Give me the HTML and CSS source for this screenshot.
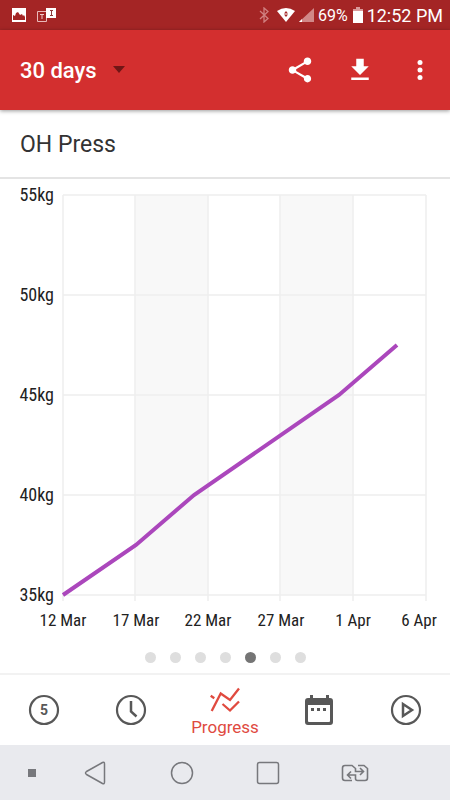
FILE: index.html
```html
<!DOCTYPE html>
<html lang="en">
<head>
    <meta charset="UTF-8">
    <meta name="viewport" content="width=device-width, initial-scale=1.0">
    <title>Progress - OH Press</title>
    <link rel="stylesheet" href="styles.css">
</head>
<body>
    <div class="status-bar">
        <svg width="14" height="14" viewBox="0 0 14 14">
            <path fill="#fff" fill-rule="evenodd" d="M0 0h14v14H0zM1 12h12V9l-1-2-1 1-1-2-2 1-2-3-2 1-1 3-2-1z"/>
        </svg>
        <svg class="status-translate" width="20" height="14" viewBox="0 0 20 14">
            <path fill="none" stroke="#e9b9b9" d="M9.500 3.500h-9v10h9z"/>
            <path fill="#fff" d="M9 0h10v10H9z"/>
            <path fill="none" stroke="#f0caca" d="M3 6.500h4M5 6v5"/>
            <path fill="none" stroke="#8c3a3a" d="M13 2.500h3M14.500 3v4M13 7.500h3"/>
        </svg>
        <div class="status-right">
            <svg class="status-bluetooth" width="10" height="16" viewBox="0 0 10 16">
                <path fill="none" stroke="#d08080" stroke-width="1.300" d="M1 4l8 7.500L5 15V1l4 3.500L1 12"/>
            </svg>
            <svg class="status-wifi" width="18" height="14" viewBox="0 0 18 14">
                <path fill="#fff" d="M0 3Q9-3 18 3L9 14z"/>
                <path fill="#a42525" d="M9 3l2 2.500H7zM9 9l2-2.500H7z"/>
            </svg>
            <svg class="status-signal" width="15" height="14" viewBox="0 0 15 14">
                <path fill="#d18888" d="M15 0v14H0z"/>
                <path fill="#fff" d="M3 11v3H0z"/>
            </svg>
            <span class="battery-level">69%</span>
            <svg class="status-battery" width="10" height="16" viewBox="0 0 10 16">
                <path fill="#d99a9a" d="M3 0h4v2h3v3H0V2h3z"/>
                <path fill="#fff" d="M0 4h10v12H0z"/>
            </svg>
            <span class="time">12:52 PM</span>
        </div>
    </div>

    <header class="toolbar">
        <select class="period" aria-label="Period">
            <option>30 days</option>
            <option>60 days</option>
            <option>90 days</option>
        </select>
        <div class="actions">
            <button aria-label="Share">
                <svg width="30" height="30" viewBox="0 0 24 24">
                    <path fill="#fff" d="M18 16.080c-.76 0-1.440.3-1.960.77L8.910 12.700c.05-.23.09-.46.09-.7s-.04-.47-.09-.7l7.050-4.110c.54.5 1.250.81 2.040.81 1.660 0 3-1.340 3-3s-1.340-3-3-3-3 1.340-3 3c0 .24.04.47.09.7L8.040 9.810C7.500 9.310 6.790 9 6 9c-1.660 0-3 1.340-3 3s1.340 3 3 3c.79 0 1.500-.31 2.040-.81l7.120 4.160c-.05.21-.08.43-.08.65 0 1.610 1.310 2.920 2.920 2.920s2.920-1.310 2.920-2.920-1.310-2.920-2.920-2.920z"/>
                </svg>
            </button>
            <button aria-label="Download">
                <svg width="30" height="30" viewBox="0 0 24 24">
                    <path fill="#fff" d="M19 9h-4V3H9v6H5l7 7 7-7zM5 18v2h14v-2H5z"/>
                </svg>
            </button>
            <button aria-label="More options">
                <svg width="30" height="30" viewBox="0 0 24 24">
                    <g fill="#fff">
                        <circle cx="12" cy="6" r="2"/>
                        <circle cx="12" cy="12" r="2"/>
                        <circle cx="12" cy="18" r="2"/>
                    </g>
                </svg>
            </button>
        </div>
    </header>

    <main>
        <h1>OH Press</h1>

        <svg class="chart" viewBox="0 0 450 461" role="img" aria-label="OH Press weight over 30 days">
            <g class="bands">
                <rect x="135" y="16" width="73" height="400"/>
                <rect x="280" y="16" width="73" height="400"/>
            </g>
            <g class="grid">
                <path d="M63 16h363M63 116h363M63 216h363M63 316h363M63 416h363"/>
                <path d="M63 16v406M135 16v406M208 16v406M280 16v406M353 16v406M426 16v406"/>
            </g>
            <g class="y-labels">
                <text x="54" y="22">55kg</text>
                <text x="54" y="122">50kg</text>
                <text x="54" y="222">45kg</text>
                <text x="54" y="322">40kg</text>
                <text x="54" y="422">35kg</text>
            </g>
            <g class="x-labels">
                <text x="63" y="447">12 Mar</text>
                <text x="136" y="447">17 Mar</text>
                <text x="208" y="447">22 Mar</text>
                <text x="281" y="447">27 Mar</text>
                <text x="353" y="447">1 Apr</text>
                <text x="419" y="447">6 Apr</text>
            </g>
            <polyline class="line" points="63,416 136,366 194,316 339,216 397,166"/>
        </svg>

        <div class="dots">
            <span></span>
            <span></span>
            <span></span>
            <span></span>
            <span class="current"></span>
            <span></span>
            <span></span>
        </div>
    </main>

    <nav class="tabs">
        <a href="#workout" aria-label="Workout">
            <svg width="32" height="32" viewBox="0 0 32 32">
                <circle cx="16" cy="16" r="14" fill="none" stroke="#585858" stroke-width="2.200"/>
                <text class="five" x="16" y="21">5</text>
            </svg>
        </a>
        <a href="#history" aria-label="History">
            <svg width="32" height="32" viewBox="0 0 32 32" fill="none" stroke="#585858">
                <circle cx="16" cy="16" r="14" stroke-width="2.200"/>
                <path stroke-width="2.500" d="M16 7v10.500l5.500 5"/>
            </svg>
        </a>
        <a href="#progress" class="active">
            <svg width="30" height="28" viewBox="0 0 30 28" fill="none" stroke="#e04a3f" stroke-width="2.300">
                <path d="M.7 9.800l3.600 2.500M1.700 25l9-17.500L20 14l9-11.500M12.500 18l7.500 6.500 9-9"/>
            </svg>
            <span>Progress</span>
        </a>
        <a href="#calendar" aria-label="Calendar">
            <svg width="32" height="32" viewBox="0 0 32 32" fill="#585858">
                <path fill-rule="evenodd" d="M7 1h3v3h13V1h3v3h1q3 0 3 3v21q0 3-3 3H5q-3 0-3-3V7q0-3 3-3h2zM5 11v16q0 1 1 1h20q1 0 1-1V11z"/>
                <path d="M8 14h3v3H8zM14 14h3v3h-3zM20 14h3v3h-3z"/>
            </svg>
        </a>
        <a href="#videos" aria-label="Videos">
            <svg width="32" height="32" viewBox="0 0 32 32" fill="none" stroke="#585858">
                <circle cx="16" cy="16" r="14" stroke-width="2.200"/>
                <path stroke-width="2.500" d="M13 10v12l9-6z"/>
            </svg>
        </a>
    </nav>

    <div class="system-bar">
        <button aria-label="Hide bar">
            <svg width="8" height="8" viewBox="0 0 8 8"><path fill="#77787c" d="M0 0h8v8H0z"/></svg>
        </button>
        <button aria-label="Back">
            <svg width="24" height="24" viewBox="0 0 24 24">
                <path fill="none" stroke="#77787c" stroke-width="1.500" stroke-linejoin="round" d="M19.500 1.500Q21.500.5 21.500 3v18q0 2.500-2 1.500L3.500 13.500q-2-1.500 0-3z"/>
            </svg>
        </button>
        <button aria-label="Home">
            <svg width="24" height="24" viewBox="0 0 24 24">
                <circle cx="12" cy="12" r="10.500" fill="none" stroke="#77787c" stroke-width="1.500"/>
            </svg>
        </button>
        <button aria-label="Recent apps">
            <svg width="24" height="24" viewBox="0 0 24 24">
                <rect x="1.500" y="1.500" width="21" height="21" rx="2" fill="none" stroke="#77787c" stroke-width="1.500"/>
            </svg>
        </button>
        <button aria-label="Switch apps">
            <svg width="28" height="20" viewBox="0 0 28 20">
                <path fill="none" stroke="#77787c" stroke-width="1.600" d="M11 17.500H4q-2.500 0-2.500-2.500V5q0-2.500 2.500-2.500h7l3.500 3v3H22M19 5l3.500 3.500L19 12M17 2.500h6l3.500 3v9.500q0 2.500-2.500 2.500h-7.500q-2 0-2-2V12H7M10 8.500L6.500 12l3.500 3.500"/>
            </svg>
        </button>
    </div>
</body>
</html>
```
FILE: styles.css
```css
* { margin: 0; padding: 0; box-sizing: border-box; }
body {
    font-family: Roboto, sans-serif;
    background: #fff;
    color: #333;
    min-height: 100vh;
    display: flex;
    flex-direction: column;
}
svg { display: block; flex-shrink: 0; }
button { background: none; border: none; cursor: pointer; }

.status-bar {
    height: 30px;
    padding: 0 7px 0 12px;
    display: flex;
    align-items: center;
    background: #a42525;
    color: #fff;
}
.status-translate { margin-left: 11px; }
.status-right { display: flex; align-items: center; margin-left: auto; }
.status-wifi { margin-left: 8px; }
.status-signal { margin-left: 4px; }
.battery-level { margin-left: 4px; font-size: 16px; }
.status-battery { margin: 0 4px 0 5px; }
.time { font-size: 18px; }

.toolbar {
    height: 80px;
    padding: 0 15px 0 20px;
    display: flex;
    align-items: center;
    justify-content: space-between;
    background: #d32f2f;
    box-shadow: 0 1px 4px rgba(0, 0, 0, 0.4);
}
.period {
    appearance: none;
    border: none;
    padding-right: 28px;
    font-family: inherit;
    font-size: 22px;
    font-weight: 500;
    color: #fff;
    background: url("data:image/svg+xml,%3Csvg xmlns='http://www.w3.org/2000/svg' width='12' height='7'%3E%3Cpath fill='%23701616' d='M0 0h12L6 7z'/%3E%3C/svg%3E") no-repeat right 8px;
}
.actions { display: flex; gap: 30px; }

main { flex: 1; }
h1 {
    padding: 20px 20px 18px;
    border-bottom: 2px solid #e4e4e4;
    font-size: 23px;
    font-weight: 400;
    line-height: 29px;
}

.chart {
    width: 100%;
    font-family: "Roboto Condensed", Roboto, sans-serif;
    font-size: 18px;
}
.bands rect { fill: #f8f8f8; }
.grid path { stroke: #eee; stroke-width: 1.500; }
.chart text { fill: #222; }
.y-labels { text-anchor: end; }
.x-labels { font-size: 17px; text-anchor: middle; }
.line { fill: none; stroke: #ab47bc; stroke-width: 4; }

.dots { display: flex; justify-content: center; gap: 14px; padding: 12px 0 10px; }
.dots span { width: 11px; height: 11px; border-radius: 50%; background: #dedede; }
.dots .current { background: #757575; }

.tabs {
    display: flex;
    height: 72px;
    border-top: 2px solid #f2f2f2;
}
.tabs a {
    flex: 1;
    display: flex;
    flex-direction: column;
    align-items: center;
    justify-content: center;
    color: #585858;
    text-decoration: none;
}
.tabs .active {
    flex: 0 0 100px;
    gap: 2px;
    padding-top: 4px;
    color: #e04a3f;
    font-size: 17px;
    line-height: 22px;
}
.five { font-size: 14px; font-weight: 700; text-anchor: middle; fill: #585858; }

.system-bar {
    display: grid;
    grid-template-columns: 3fr 5fr 5fr 5fr 5fr 3fr;
    height: 55px;
    background: #e9eaee;
}
.system-bar button { display: flex; align-items: center; justify-content: center; }
.system-bar button:first-child { justify-content: flex-end; padding-right: 16px; }
```
